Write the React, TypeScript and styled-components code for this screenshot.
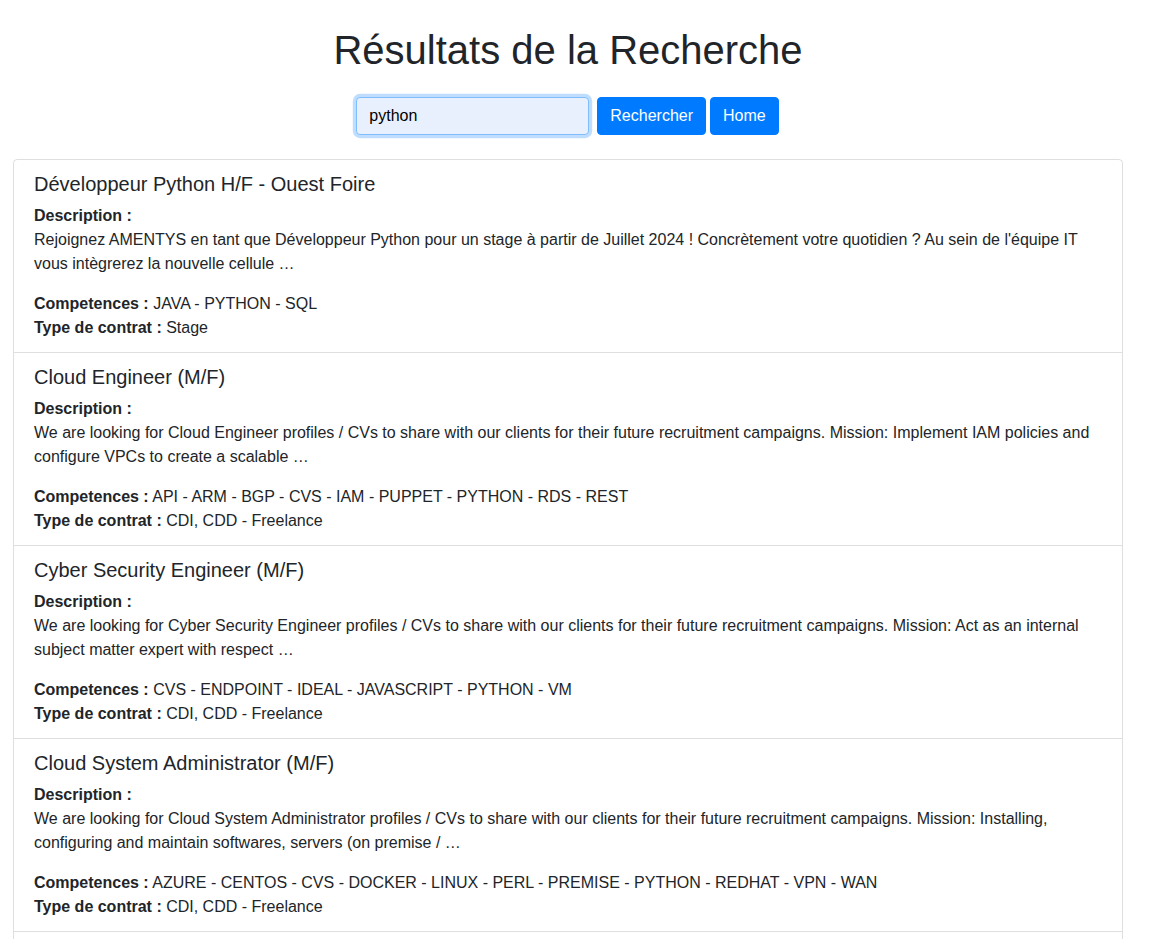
import React from "react";
import styled, { createGlobalStyle } from "styled-components";

const GlobalStyle = createGlobalStyle`
  *, *::before, *::after { box-sizing: border-box; }
  body {
    margin: 0;
    font-family: "Liberation Sans", Arial, sans-serif;
    font-size: 16px;
    line-height: 1.5;
    color: #212529;
    background: #fff;
  }
`;

const Container = styled.div`
  width: 1110px;
  margin-left: 13px;
`;

const Title = styled.h1`
  margin: 26px 0 23px;
  font-size: 40px;
  font-weight: 500;
  line-height: 1.2;
  text-align: center;
`;

const SearchForm = styled.form`
  display: flex;
  justify-content: center;
  align-items: center;
  padding-right: 1px;
  margin-bottom: 24px;
`;

const SearchInput = styled.input`
  width: 233px;
  height: 38px;
  padding: 6px 12px;
  font-family: inherit;
  font-size: 16px;
  line-height: 1.5;
  color: #000;
  background: #e8f0fe;
  border: 1px solid #80bdff;
  border-radius: 4px;
  box-shadow: 0 0 0 3.2px rgba(0, 123, 255, 0.25);
  outline: none;
  margin-right: 8px;
`;

const Button = styled.button<{ $gap?: number }>`
  height: 38px;
  padding: 6px 12px;
  font-family: inherit;
  font-size: 16px;
  line-height: 1.5;
  color: #fff;
  background: #007bff;
  border: 1px solid #007bff;
  border-radius: 4px;
  cursor: pointer;
  margin-left: ${(p) => p.$gap ?? 0}px;
`;

const List = styled.ul`
  list-style: none;
  margin: 0;
  padding: 0;
  display: flex;
  flex-direction: column;
`;

const Item = styled.li`
  padding: 12px 20px;
  border: 1px solid rgba(0, 0, 0, 0.125);
  & + & { border-top: none; }
  &:first-child {
    border-top-left-radius: 4px;
    border-top-right-radius: 4px;
  }
`;

const JobTitle = styled.h5`
  margin: 0 0 8px;
  font-size: 20px;
  font-weight: 500;
  line-height: 1.2;
`;

const Para = styled.p<{ $last?: boolean }>`
  margin: 0 0 ${(p) => (p.$last ? 0 : 16)}px;
`;

type Job = {
  title: string;
  description: string;
  skills: string;
  contract: string;
};

const jobs: Job[] = [
  {
    title: "Développeur Python H/F - Ouest Foire",
    description:
      "Rejoignez AMENTYS en tant que Développeur Python pour un stage à partir de Juillet 2024 ! Concrètement votre quotidien ? Au sein de l'équipe IT vous intègrerez la nouvelle cellule …",
    skills: "JAVA - PYTHON - SQL",
    contract: "Stage",
  },
  {
    title: "Cloud Engineer (M/F)",
    description:
      "We are looking for Cloud Engineer profiles / CVs to share with our clients for their future recruitment campaigns. Mission: Implement IAM policies and configure VPCs to create a scalable …",
    skills: "API - ARM - BGP - CVS - IAM - PUPPET - PYTHON - RDS - REST",
    contract: "CDI, CDD - Freelance",
  },
  {
    title: "Cyber Security Engineer (M/F)",
    description:
      "We are looking for Cyber Security Engineer profiles / CVs to share with our clients for their future recruitment campaigns. Mission: Act as an internal subject matter expert with respect …",
    skills: "CVS - ENDPOINT - IDEAL - JAVASCRIPT - PYTHON - VM",
    contract: "CDI, CDD - Freelance",
  },
  {
    title: "Cloud System Administrator (M/F)",
    description:
      "We are looking for Cloud System Administrator profiles / CVs to share with our clients for their future recruitment campaigns. Mission: Installing, configuring and maintain softwares, servers (on premise / …",
    skills:
      "AZURE - CENTOS - CVS - DOCKER - LINUX - PERL - PREMISE - PYTHON - REDHAT - VPN - WAN",
    contract: "CDI, CDD - Freelance",
  },
  {
    title: "Data Engineer (M/F)",
    description:
      "We are looking for Data Engineer profiles / CVs to share with our clients for their future recruitment campaigns. Mission: Design and build scalable data pipelines and …",
    skills: "AWS - ETL - PYTHON - SPARK - SQL",
    contract: "CDI, CDD - Freelance",
  },
];

export default function App() {
  return (
    <>
      <GlobalStyle />
      <Container>
        <Title>Résultats de la Recherche</Title>
        <SearchForm onSubmit={(e) => e.preventDefault()}>
          <SearchInput type="text" defaultValue="python" />
          <Button type="submit">Rechercher</Button>
          <Button type="button" $gap={4}>
            Home
          </Button>
        </SearchForm>
        <List>
          {jobs.map((job) => (
            <Item key={job.title}>
              <JobTitle>{job.title}</JobTitle>
              <Para>
                <strong>Description :</strong>
                <br />
                {job.description}
              </Para>
              <Para $last>
                <strong>Competences :</strong> {job.skills}
                <br />
                <strong>Type de contrat :</strong> {job.contract}
              </Para>
            </Item>
          ))}
        </List>
      </Container>
    </>
  );
}
